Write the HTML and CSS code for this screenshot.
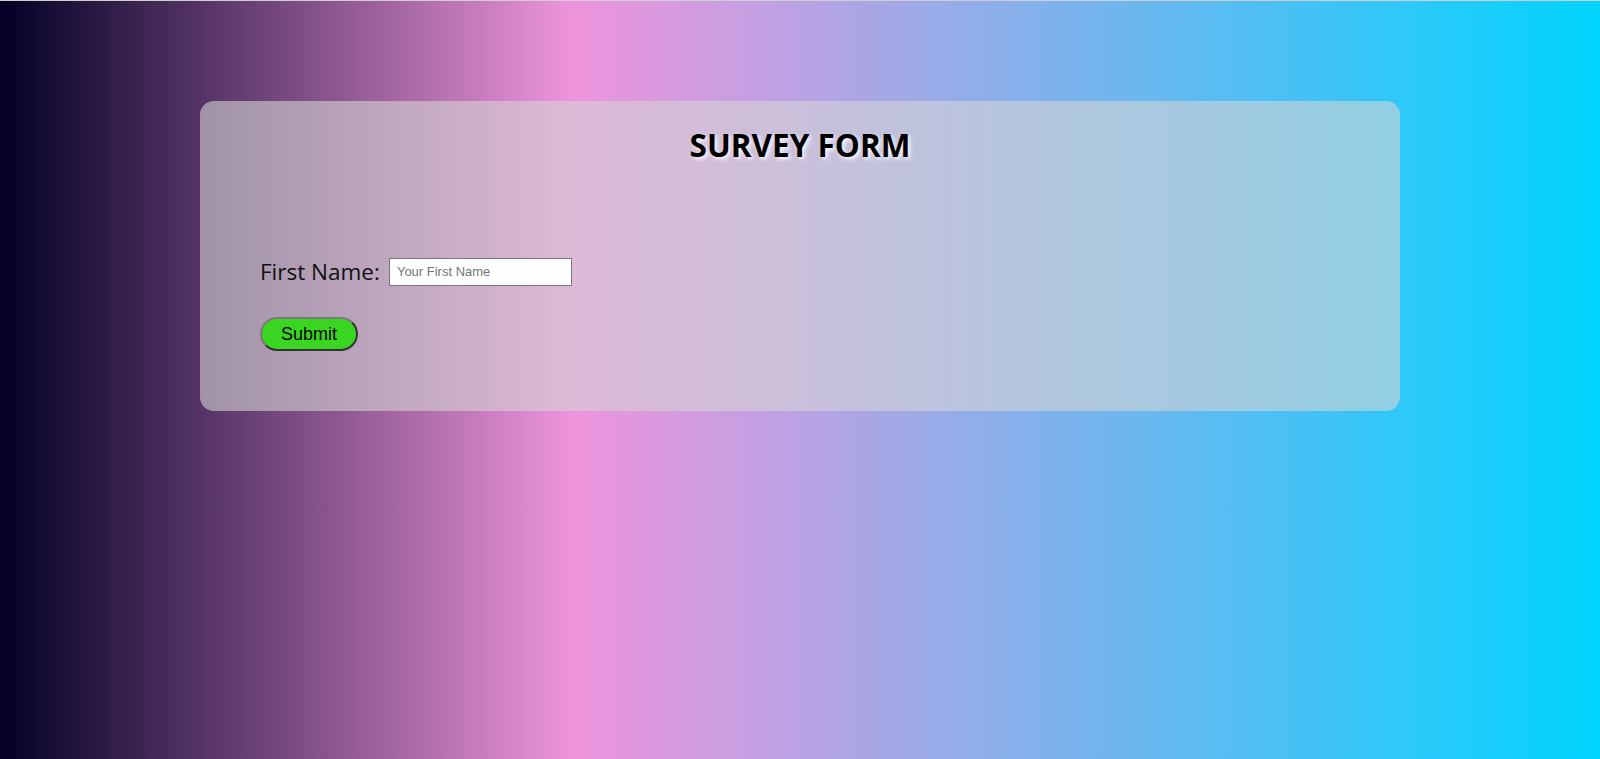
FILE: index.html
```html
<!DOCTYPE html>
<html lang="en">
<head>
<meta charset="utf-8">
<title>Survey Form</title>
<link rel="stylesheet" href="styles.css">
</head>
<body>
<div class="page">
  <form class="card">
    <h1 class="title">SURVEY FORM</h1>
    <div class="row">
      <label class="label" for="fname">First Name:</label>
      <input class="input" id="fname" type="text" placeholder="Your First Name">
    </div>
    <div class="row">
      <button class="submit" type="button">Submit</button>
    </div>
  </form>
</div>
</body>
</html>
```
FILE: styles.css
```css
html, body {
  margin: 0;
  padding: 0;
}
.page {
  box-sizing: border-box;
  min-height: 100vh;
  border-top: 1px solid #cfcfcf;
  padding-top: 100px;
  background: linear-gradient(90deg, #020024 0%, #ee94dc 35.8%, #00d4ff 100%);
  font-family: "Open Sans", "Noto Sans", sans-serif;
}
.card {
  box-sizing: border-box;
  width: 1200px;
  height: 310px;
  margin: 0 auto;
  padding: 22px 60px 0;
  border-radius: 14px;
  background: rgba(211, 211, 211, 0.6);
}
.title {
  margin: 0 0 90px;
  text-align: center;
  font-size: 31.5px;
  font-weight: 700;
  color: #000;
  text-shadow: 2px 2px 4px #ffffff;
}
.row {
  display: flex;
  align-items: center;
  margin-bottom: 30px;
}
.label {
  font-size: 22.5px;
  color: #111;
  margin-right: 9px;
}
.input {
  box-sizing: border-box;
  width: 183px;
  height: 28px;
  padding: 0 7px;
  border: 1px solid #767676;
  background: #fff;
  font-family: "Liberation Sans", Arial, sans-serif;
  font-size: 13px;
}
.input::placeholder {
  color: #757575;
}
.submit {
  box-sizing: border-box;
  width: 98px;
  height: 34px;
  border: 2px solid;
  border-color: #7a7a7a #333 #333 #7a7a7a;
  border-radius: 17px;
  background: #3ad521;
  color: #000;
  font-family: "Liberation Sans", Arial, sans-serif;
  font-size: 18px;
  padding: 0;
}
```
